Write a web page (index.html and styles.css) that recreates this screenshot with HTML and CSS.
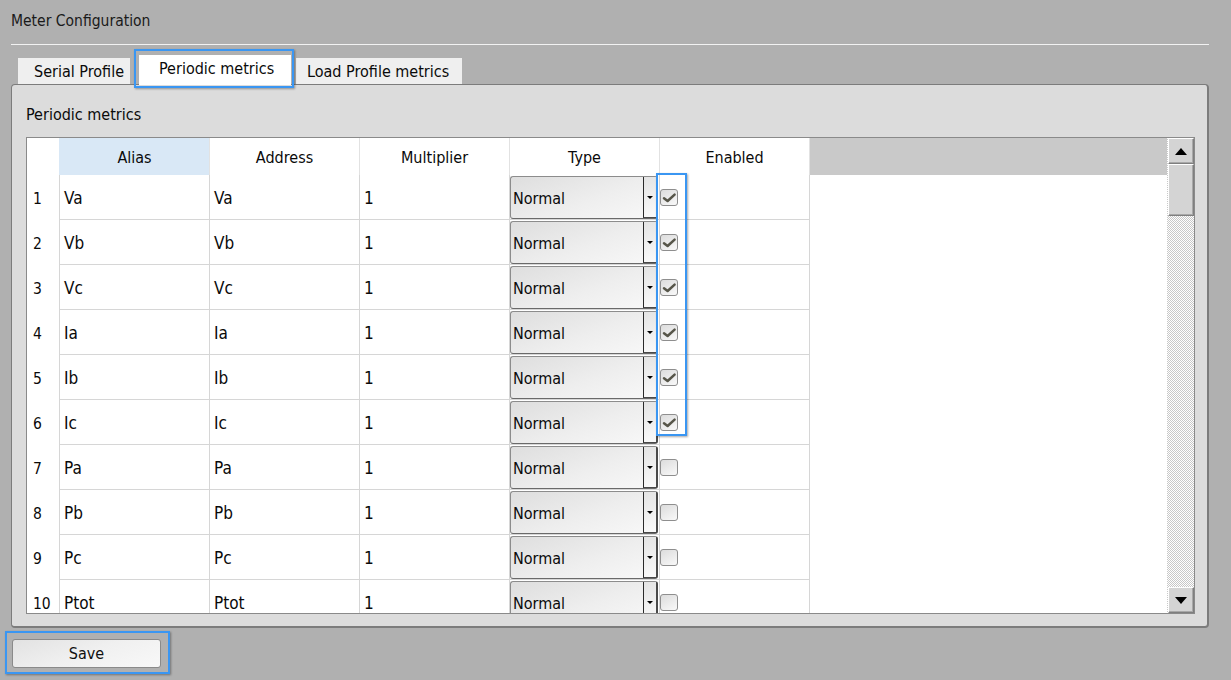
FILE: index.html
```html
<!DOCTYPE html>
<html>
<head>
<meta charset="utf-8">
<title>Meter Configuration</title>
<link rel="stylesheet" href="styles.css">
</head>
<body>
<div class="page">
  <div class="title">Meter Configuration</div>
  <div class="rule"></div>
  <div class="tabs">
    <div class="tab tab-serial">Serial Profile</div>
    <div class="tab tab-active">Periodic metrics<span class="hl"></span></div>
    <div class="tab tab-load">Load Profile metrics</div>
  </div>
  <div class="panel">
    <div class="panel-title">Periodic metrics</div>
    <div class="grid">
      <div class="grid-main">
        <div class="head">
          <div class="num"></div>
          <div class="hcell hcell-sel">Alias</div>
          <div class="hcell">Address</div>
          <div class="hcell">Multiplier</div>
          <div class="hcell">Type</div>
          <div class="hcell">Enabled</div>
          <div class="hfill"></div>
        </div>
        <div class="body" id="rows"></div>
        <div class="hl hl-checks"></div>
      </div>
      <div class="sb">
        <div class="sb-btn"><span class="tri-up"></span></div>
        <div class="sb-thumb"></div>
        <div class="sb-track"></div>
        <div class="sb-btn"><span class="tri-down"></span></div>
      </div>
    </div>
  </div>
  <div class="actions">
    <div class="save-wrap">
      <button class="save">Save</button>
      <span class="hl"></span>
    </div>
  </div>
</div>
<script src="app.js"></script>
</body>
</html>
```
FILE: app.js
```js
const data = [
  ["Va", true], ["Vb", true], ["Vc", true], ["Ia", true], ["Ib", true],
  ["Ic", true], ["Pa", false], ["Pb", false], ["Pc", false], ["Ptot", false]
];
const check = '<svg class="tick" width="16" height="15" viewBox="0 0 16 15"><path d="M3 8.2 L6.6 11 L13.6 4.6" fill="none" stroke="#57564a" stroke-width="2.5" stroke-linecap="round" stroke-linejoin="round"/></svg>';
const rows = document.getElementById("rows");
rows.innerHTML = data.map((d, i) => `
  <div class="row">
    <div class="num">${i + 1}</div>
    <div class="cell">${d[0]}</div>
    <div class="cell">${d[0]}</div>
    <div class="cell">1</div>
    <div class="cell cell-type"><div class="select"><span class="sel-text">Normal</span><span class="sel-btn"><span class="tri-small"></span></span></div></div>
    <div class="cell cell-en"><span class="chk">${d[1] ? check : ""}</span></div>
    <div class="fill"></div>
  </div>`).join("");
```
FILE: styles.css
```css
html,
body {
  background: #b0b0b0;
}

body {
  margin: 0;
  min-height: 680px;
  font-family: "DejaVu Sans Condensed", "DejaVu Sans", sans-serif;
  font-stretch: condensed;
  font-size: 16px;
  color: #0a0a0a;
}

.page {
  padding: 0 22px 12px 11px;
}

.title {
  height: 44px;
  box-sizing: border-box;
  padding-top: 11px;
  line-height: 20px;
  font-size: 15.5px;
  color: #1a1a1a;
}

.rule {
  height: 1px;
  background: #f2f2f2;
}

.tabs {
  display: flex;
  align-items: flex-end;
  height: 29px;
  margin-top: 10px;
  padding-left: 7px;
}

.tab {
  position: relative;
  box-sizing: border-box;
  height: 26px;
  padding-top: 1px;
  line-height: 26px;
  background: #efefef;
  white-space: nowrap;
}

.tab-serial {
  width: 112px;
  padding-left: 16px;
}

.tab-active {
  width: 152px;
  height: 30px;
  line-height: 28px;
  margin-left: 9px;
  margin-bottom: -1px;
  padding-left: 20px;
  padding-top: 0;
  background: #fff;
  z-index: 2;
}

.tab-load {
  width: 166px;
  margin-left: 5px;
  padding-left: 11px;
}

.hl {
  position: absolute;
  box-sizing: border-box;
  border: 2px solid #3a96f2;
  box-shadow: 1px 1px 2px rgba(0, 0, 0, 0.35);
  pointer-events: none;
  z-index: 3;
}

.tab-active .hl {
  left: -5px;
  right: -3px;
  top: -6px;
  bottom: -3px;
}

.panel {
  height: 544px;
  box-sizing: border-box;
  background: #dcdcdc;
  border: solid #7c7c7c;
  border-width: 1px 2px 2px 1px;
  border-radius: 4px;
}

.panel-title {
  padding: 20px 14px 12px;
  line-height: 20px;
}

.grid {
  display: flex;
  height: 477px;
  box-sizing: border-box;
  margin: 0 12px 0 14px;
  border: 1px solid #8a8a8a;
  background: #fff;
}

.grid-main {
  position: relative;
  flex: 1;
  min-width: 0;
  display: flex;
  flex-direction: column;
}

.head {
  display: flex;
  height: 37px;
  flex: none;
}

.num {
  width: 32px;
  flex: none;
  box-sizing: border-box;
  padding-left: 6px;
  padding-top: 2px;
  font-size: 15.5px;
  display: flex;
  align-items: center;
}

.hcell {
  width: 150px;
  flex: none;
  box-sizing: border-box;
  border-left: 1px solid #e2e2e2;
  padding-top: 2px;
  display: flex;
  align-items: center;
  justify-content: center;
}

.hcell-sel {
  background: #d9e8f6;
  border-left-color: #d9e8f6;
}

.hfill {
  flex: 1;
  background: #c9c9c9;
  border-left: 1px solid #e2e2e2;
}

.body {
  flex: 1;
  overflow: hidden;
}

.row {
  display: flex;
  height: 45px;
}

.cell {
  width: 150px;
  flex: none;
  box-sizing: border-box;
  border-left: 1px solid #d6d6d6;
  border-bottom: 1px solid #d6d6d6;
  padding-left: 4px;
  padding-top: 2px;
  font-size: 17px;
  display: flex;
  align-items: center;
}

.cell-type {
  padding: 0;
  font-size: 16px;
  align-items: flex-start;
}

.select {
  display: flex;
  width: 148px;
  height: 43px;
  margin-top: 1px;
  box-sizing: border-box;
  border: 1px solid #8c8c8c;
  border-right: 2px solid #4a4a4a;
  border-bottom-color: #6a6a6a;
  border-radius: 3px;
  background: linear-gradient(160deg, #dedede 0%, #eeeeee 55%, #f8f8f8 100%);
}

.sel-text {
  flex: 1;
  padding-left: 2px;
  padding-top: 2px;
  display: flex;
  align-items: center;
}

.sel-btn {
  width: 13px;
  box-sizing: border-box;
  border-left: 1px solid #2a2a2a;
  border-bottom: 1px solid #4a4a4a;
  display: flex;
  align-items: center;
  justify-content: center;
  background: linear-gradient(160deg, #e4e4e4, #fafafa);
}

.tri-small {
  width: 0;
  height: 0;
  border-left: 3px solid transparent;
  border-right: 3px solid transparent;
  border-top: 3px solid #000;
}

.cell-en {
  padding: 0;
}

.chk {
  width: 18px;
  height: 17px;
  box-sizing: border-box;
  border: 1px solid #8e8e8e;
  border-radius: 3px;
  background: linear-gradient(150deg, #dcdcdc, #f9f9f9);
  display: block;
  position: relative;
}

.tick {
  position: absolute;
  left: 0;
  top: 0;
}

.fill {
  flex: 1;
  border-left: 1px solid #d6d6d6;
}

.hl-checks {
  left: 629px;
  top: 35px;
  width: 31px;
  height: 263px;
}

.sb {
  width: 27px;
  flex: none;
  box-sizing: border-box;
  padding-left: 1px;
  display: flex;
  flex-direction: column;
  background: repeating-conic-gradient(#c8c8c8 0 25%, #ffffff 0 50%) 0 0 / 2px 2px;
}

.sb-btn,
.sb-thumb {
  box-sizing: border-box;
  background: #d4d4d4;
  border: 1px solid;
  border-color: #ffffff #7f7f7f #7f7f7f #ffffff;
  box-shadow: inset -1px -1px 0 #a8a8a8;
}

.sb-btn {
  height: 26px;
  display: flex;
  align-items: center;
  justify-content: center;
}

.sb-thumb {
  height: 52px;
}

.sb-track {
  flex: 1;
}

.tri-up {
  width: 0;
  height: 0;
  border-left: 6.5px solid transparent;
  border-right: 6.5px solid transparent;
  border-bottom: 7px solid #000;
}

.tri-down {
  width: 0;
  height: 0;
  border-left: 6.5px solid transparent;
  border-right: 6.5px solid transparent;
  border-top: 7px solid #000;
}

.actions {
  margin-top: 11px;
  padding-left: 1px;
}

.save-wrap {
  position: relative;
  width: 149px;
  height: 29px;
}

.save {
  display: block;
  width: 149px;
  height: 29px;
  padding: 0;
  box-sizing: border-box;
  border: 1px solid #8a8a8a;
  border-radius: 3px;
  background: linear-gradient(160deg, #e2e2e2 0%, #f0f0f0 50%, #f8f8f8 100%);
  font: inherit;
  font-size: 16px;
  color: #111;
}

.save-wrap .hl {
  left: -7px;
  top: -8px;
  right: -9px;
  bottom: -6px;
}
```
